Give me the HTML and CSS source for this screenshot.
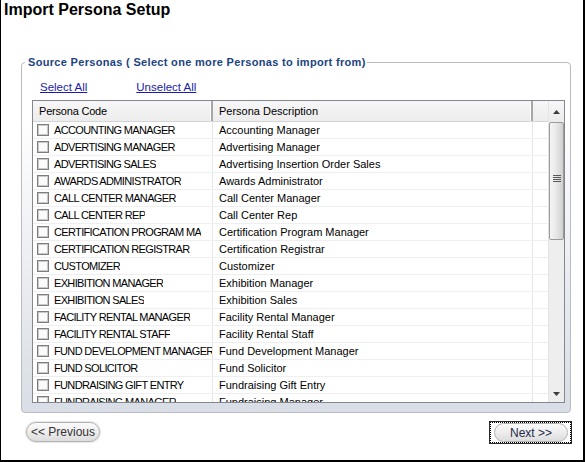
FILE: index.html
```html
<!DOCTYPE html>
<html>
<head>
<meta charset="utf-8">
<link rel="stylesheet" href="styles.css">
</head>
<body>
<div class="window">
  <h1 class="title">Import Persona Setup</h1>
  <fieldset class="group">
    <legend>Source Personas ( Select one more Personas to import from)</legend>
    <div class="links">
      <a href="#" class="link">Select All</a>
      <a href="#" class="link link-second">Unselect All</a>
    </div>
    <div class="grid">
      <div class="grid-main">
        <div class="grid-head">
          <div class="hcell hcell-code">Persona Code</div>
          <div class="hcell">Persona Description</div>
          <div class="hcell hcell-empty"></div>
        </div>
        <div class="grid-body">
          <div class="row"><div class="cell code"><span class="cb"></span><span class="txt">ACCOUNTING MANAGER</span></div><div class="cell desc">Accounting Manager</div><div class="cell pad"></div></div>
          <div class="row"><div class="cell code"><span class="cb"></span><span class="txt">ADVERTISING MANAGER</span></div><div class="cell desc">Advertising Manager</div><div class="cell pad"></div></div>
          <div class="row"><div class="cell code"><span class="cb"></span><span class="txt">ADVERTISING SALES</span></div><div class="cell desc">Advertising Insertion Order Sales</div><div class="cell pad"></div></div>
          <div class="row"><div class="cell code"><span class="cb"></span><span class="txt">AWARDS ADMINISTRATOR</span></div><div class="cell desc">Awards Administrator</div><div class="cell pad"></div></div>
          <div class="row"><div class="cell code"><span class="cb"></span><span class="txt">CALL CENTER MANAGER</span></div><div class="cell desc">Call Center Manager</div><div class="cell pad"></div></div>
          <div class="row"><div class="cell code"><span class="cb"></span><span class="txt">CALL CENTER REP</span></div><div class="cell desc">Call Center Rep</div><div class="cell pad"></div></div>
          <div class="row"><div class="cell code"><span class="cb"></span><span class="txt">CERTIFICATION PROGRAM MA</span></div><div class="cell desc">Certification Program Manager</div><div class="cell pad"></div></div>
          <div class="row"><div class="cell code"><span class="cb"></span><span class="txt">CERTIFICATION REGISTRAR</span></div><div class="cell desc">Certification Registrar</div><div class="cell pad"></div></div>
          <div class="row"><div class="cell code"><span class="cb"></span><span class="txt">CUSTOMIZER</span></div><div class="cell desc">Customizer</div><div class="cell pad"></div></div>
          <div class="row"><div class="cell code"><span class="cb"></span><span class="txt">EXHIBITION MANAGER</span></div><div class="cell desc">Exhibition Manager</div><div class="cell pad"></div></div>
          <div class="row"><div class="cell code"><span class="cb"></span><span class="txt">EXHIBITION SALES</span></div><div class="cell desc">Exhibition Sales</div><div class="cell pad"></div></div>
          <div class="row"><div class="cell code"><span class="cb"></span><span class="txt">FACILITY RENTAL MANAGER</span></div><div class="cell desc">Facility Rental Manager</div><div class="cell pad"></div></div>
          <div class="row"><div class="cell code"><span class="cb"></span><span class="txt">FACILITY RENTAL STAFF</span></div><div class="cell desc">Facility Rental Staff</div><div class="cell pad"></div></div>
          <div class="row"><div class="cell code"><span class="cb"></span><span class="txt">FUND DEVELOPMENT MANAGER</span></div><div class="cell desc">Fund Development Manager</div><div class="cell pad"></div></div>
          <div class="row"><div class="cell code"><span class="cb"></span><span class="txt">FUND SOLICITOR</span></div><div class="cell desc">Fund Solicitor</div><div class="cell pad"></div></div>
          <div class="row"><div class="cell code"><span class="cb"></span><span class="txt">FUNDRAISING GIFT ENTRY</span></div><div class="cell desc">Fundraising Gift Entry</div><div class="cell pad"></div></div>
          <div class="row"><div class="cell code"><span class="cb"></span><span class="txt">FUNDRAISING MANAGER</span></div><div class="cell desc">Fundraising Manager</div><div class="cell pad"></div></div>
        </div>
      </div>
      <div class="scrollbar">
        <div class="sb-btn sb-up">
          <svg width="7" height="4" viewBox="0 0 7 4"><path d="M0 4 L3.5 0 L7 4 Z" fill="#3c3c3c"/></svg>
        </div>
        <div class="sb-thumb"><span class="grip"></span></div>
        <div class="sb-track"></div>
        <div class="sb-btn sb-down">
          <svg width="7" height="4" viewBox="0 0 7 4"><path d="M0 0 L7 0 L3.5 4 Z" fill="#3c3c3c"/></svg>
        </div>
      </div>
    </div>
  </fieldset>
  <div class="buttons">
    <button class="btn btn-prev" type="button">&lt;&lt; Previous</button>
    <span class="focus"><span class="focus-inner"><button class="btn btn-next" type="button">Next &gt;&gt;</button></span></span>
  </div>
</div>
</body>
</html>
```

FILE: styles.css
```css
* { box-sizing: border-box; }

body {
  margin: 0;
  background: #fff;
  font-family: "Liberation Sans", Arial, sans-serif;
}

.window {
  width: 585px;
  height: 462px;
  border-left: 1px solid #000;
  border-right: 2px solid #000;
  border-bottom: 2px solid #000;
  display: flex;
  flex-direction: column;
}

.title {
  margin: 0;
  padding-left: 3px;
  font: bold 16px/20px "Liberation Sans", Arial, sans-serif;
  color: #000;
}

.group {
  margin: 34px 12px 0 20px;
  padding: 10px 5px 9px 10px;
  border: 1px solid #b9bcc2;
  border-radius: 4px;
  min-width: 0;
  background: linear-gradient(#ffffff 0%, #ffffff 15%, #d9dde5 100%);
}

.group legend {
  margin-left: -7px;
  padding: 0 1px 0 3px;
  font: bold 11px/16px "Liberation Sans", Arial, sans-serif;
  letter-spacing: 0.32px;
  color: #1c4481;
}

.links {
  height: 14px;
  padding-left: 8px;
  display: flex;
  font: 11.5px/14px "Liberation Sans", Arial, sans-serif;
}

.link {
  color: #1b1ba8;
  text-decoration: underline;
}

.link-second { margin-left: 49px; }

.grid {
  margin-top: 6px;
  width: 533px;
  height: 303px;
  border: 1px solid #828790;
  background: #fff;
  display: flex;
}

.grid-main {
  flex: 1;
  display: flex;
  flex-direction: column;
  min-width: 0;
}

.grid-head {
  height: 21px;
  display: grid;
  grid-template-columns: 180px 320px 15px;
  background: linear-gradient(#f7f7f7, #ececec);
  border-bottom: 1px solid #d5d5d5;
}

.hcell {
  font: 11px/20px "Liberation Sans", Arial, sans-serif;
  color: #000;
  padding-left: 6px;
  border-right: 2px solid #a7a7a7;
  box-shadow: inset -1px 0 0 #fff;
  white-space: nowrap;
  overflow: hidden;
}

.hcell-code { letter-spacing: -0.2px; }

.hcell-empty { border-right: none; box-shadow: none; }

.grid-body {
  flex: 1;
  overflow: hidden;
}

.row {
  height: 17px;
  display: grid;
  grid-template-columns: 180px 320px 15px;
  border-bottom: 1px solid #efefef;
}

.cell {
  font: 11px/16px "Liberation Sans", Arial, sans-serif;
  color: #000;
  border-right: 1px solid #e6e6e6;
  white-space: nowrap;
  overflow: hidden;
}

.code {
  display: flex;
  align-items: center;
  padding-left: 4px;
}

.cb {
  flex: none;
  width: 12px;
  height: 12px;
  border: 1px solid #7d7d7d;
  box-shadow: inset 0 0 0 1px #c9c9c9;
  background: #fbfbfb;
  margin-right: 5px;
}

.txt {
  overflow: hidden;
  letter-spacing: -0.65px;
}

.desc { padding-left: 6px; }

.pad { border-right: none; }

.scrollbar {
  width: 16px;
  display: flex;
  flex-direction: column;
  background: #eeeeee;
  border-left: 1px solid #e4e4e4;
}

.sb-btn {
  display: flex;
  align-items: center;
  justify-content: center;
}

.sb-up {
  height: 21px;
  background: linear-gradient(#f7f7f7, #ececec);
}

.sb-thumb {
  height: 118px;
  border: 1px solid #9a9a9a;
  border-radius: 2px;
  background: linear-gradient(to right, #f5f5f5 0%, #e9e9e9 45%, #d0d0d0 100%);
  display: flex;
  align-items: center;
  justify-content: center;
}

.grip {
  width: 8px;
  height: 8px;
  background: repeating-linear-gradient(#5a5a5a 0 1px, transparent 1px 2px);
  margin-top: -4px;
}

.sb-track { flex: 1; }

.sb-down { height: 17px; }

.buttons {
  margin-top: 8px;
  padding: 0 11px 0 24px;
  display: flex;
  justify-content: space-between;
  align-items: flex-start;
}

.btn {
  margin: 0;
  padding: 0;
  font: 12px/1 "Liberation Sans", Arial, sans-serif;
  border: 1px solid #b3b3b3;
  border-radius: 10px;
  background: linear-gradient(#fbfbfb 0%, #efefef 45%, #dcdcdc 100%);
  cursor: pointer;
}

.btn-prev {
  width: 74px;
  height: 20px;
  margin: 1px 0 0 1px;
  color: #333;
  box-shadow: 0 0 0 1px #e8e8e8;
}

.focus {
  display: block;
  border: 1px solid #2a2a2a;
}

.focus-inner {
  display: block;
  border: 1px dotted #000;
  padding: 0 2px 0 3px;
}

.btn-next {
  display: block;
  width: 74px;
  height: 19px;
  color: #1f2a4a;
}
```
